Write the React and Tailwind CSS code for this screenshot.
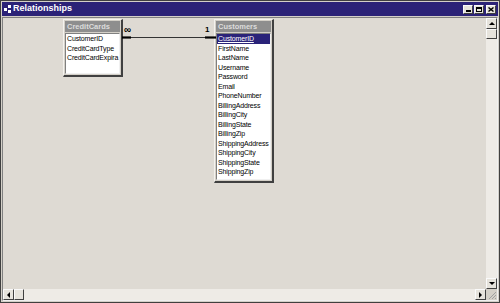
import React from 'react';

const font = { fontFamily: '"Liberation Sans", Arial, sans-serif' };

const customerFields = [
  'CustomerID', 'FirstName', 'LastName', 'Username', 'Password', 'Email',
  'PhoneNumber', 'BillingAddress', 'BillingCity', 'BillingState', 'BillingZip',
  'ShippingAddress', 'ShippingCity', 'ShippingState', 'ShippingZip',
];

const cardFields = ['CustomerID', 'CreditCardType', 'CreditCardExpira'];

// a field list box on the diagram canvas
const TableBox = ({ title, fields, className, listHeight, selected }) => (
  <div className={`absolute flex flex-col border border-[#f4f2ee] border-r-[#404040] border-b-[#404040] border-r-2 border-b-2 bg-[#d4d0c8] p-[1px] ${className}`}>
    <div className="h-[11px] bg-[#8e8e8e] text-[#dcdcdc] text-[7.5px] font-bold leading-[11px] px-[2px]">{title}</div>
    <div className={`mt-[1px] bg-white border border-[#808080] border-r-[#f0f0f0] border-b-[#f0f0f0] ${listHeight}`}>
      {fields.map((f, i) => (
        <div
          key={f}
          className={`h-[9.5px] text-[7px] tracking-[-0.15px] leading-[9.5px] px-[1px] whitespace-nowrap ${
            selected && i === 0 ? 'bg-[#2a2379] text-white underline' : 'text-black'
          }`}
        >
          {f}
        </div>
      ))}
    </div>
  </div>
);

const Btn = ({ children, className = '' }) => (
  <div className={`flex items-center justify-center bg-[#e6e3dc] border border-[#fafafa] border-r-[#404040] border-b-[#404040] ${className}`}>
    {children}
  </div>
);

export default function App() {
  return (
    <div style={font} className="w-[500px] h-[303px] bg-[#d4d0c8] border border-[#404040] flex flex-col p-[1px]">
      {/* title bar */}
      <div className="h-[14px] bg-[#2b2277] flex items-center px-[2px]">
        <div className="flex items-center gap-[1px] mr-[2px]">
          <div className="w-[3px] h-[3px] bg-white" />
          <div className="flex flex-col gap-[2px]">
            <div className="w-[3px] h-[3px] bg-white" />
            <div className="w-[3px] h-[3px] bg-white" />
          </div>
        </div>
        <span className="text-white text-[9px] font-bold">Relationships</span>
        <div className="ml-auto flex gap-[1px]">
          <Btn className="w-[10px] h-[9px] items-end pb-[1px]">
            <div className="w-[5px] h-[2px] bg-black" />
          </Btn>
          <Btn className="w-[10px] h-[9px]">
            <div className="w-[6px] h-[5px] border border-black border-t-2" />
          </Btn>
          <Btn className="w-[10px] h-[9px] ml-[1px]">
            <svg width="6" height="5" viewBox="0 0 6 5">
              <path d="M0.5 0.5 L5.5 4.5 M5.5 0.5 L0.5 4.5" stroke="black" strokeWidth="1.4" />
            </svg>
          </Btn>
        </div>
      </div>

      {/* work area */}
      <div className="flex-1 flex flex-col border border-[#808080] border-r-[#f0f0f0] border-b-[#f0f0f0] mt-[1px]">
        <div className="flex-1 flex">
          <div className="flex-1 relative bg-[#dedad3] overflow-hidden">
            <TableBox
              title="CreditCards"
              fields={cardFields}
              className="left-[60px] top-[1px] w-[60px]"
              listHeight="h-[41px]"
            />
            <TableBox
              title="Customers"
              fields={customerFields}
              className="left-[211px] top-[1px] w-[60px]"
              listHeight="h-[147px]"
              selected
            />
            {/* join line */}
            <svg className="absolute left-[119px] top-[14px]" width="94" height="10" viewBox="0 0 94 10">
              <line x1="0" y1="5.5" x2="94" y2="5.5" stroke="#333" strokeWidth="1" />
              <line x1="0" y1="5.5" x2="9" y2="5.5" stroke="#000" strokeWidth="2.2" />
              <line x1="83" y1="5.5" x2="94" y2="5.5" stroke="#000" strokeWidth="2.2" />
            </svg>
            <div className="absolute left-[121px] top-[7px] text-[10px] font-bold leading-none text-black">∞</div>
            <div className="absolute left-[202px] top-[8px] text-[8px] font-bold leading-none text-black">1</div>
          </div>
          {/* vertical scrollbar */}
          <div className="w-[11px] flex flex-col bg-[#eeebe6]">
            <Btn className="h-[11px]">
              <div className="w-0 h-0 border-l-[3px] border-r-[3px] border-b-[3px] border-transparent border-b-black" />
            </Btn>
            <Btn className="h-[10px]" />
            <div className="flex-1" />
            <Btn className="h-[11px]">
              <div className="w-0 h-0 border-l-[3px] border-r-[3px] border-t-[3px] border-transparent border-t-black" />
            </Btn>
          </div>
        </div>
        {/* horizontal scrollbar */}
        <div className="h-[11px] flex bg-[#eeebe6]">
          <Btn className="w-[11px]">
            <div className="w-0 h-0 border-t-[3px] border-b-[3px] border-r-[3px] border-transparent border-r-black" />
          </Btn>
          <Btn className="w-[10px]" />
          <div className="flex-1" />
          <Btn className="w-[11px]">
            <div className="w-0 h-0 border-t-[3px] border-b-[3px] border-l-[3px] border-transparent border-l-black" />
          </Btn>
          <div className="w-[11px] bg-[#d4d0c8] flex items-end justify-end">
            <svg width="10" height="10" viewBox="0 0 10 10">
              <path d="M9 2 L2 9 M9 5 L5 9 M9 8 L8 9" stroke="#a0a0a0" strokeWidth="1" />
            </svg>
          </div>
        </div>
      </div>
    </div>
  );
}
